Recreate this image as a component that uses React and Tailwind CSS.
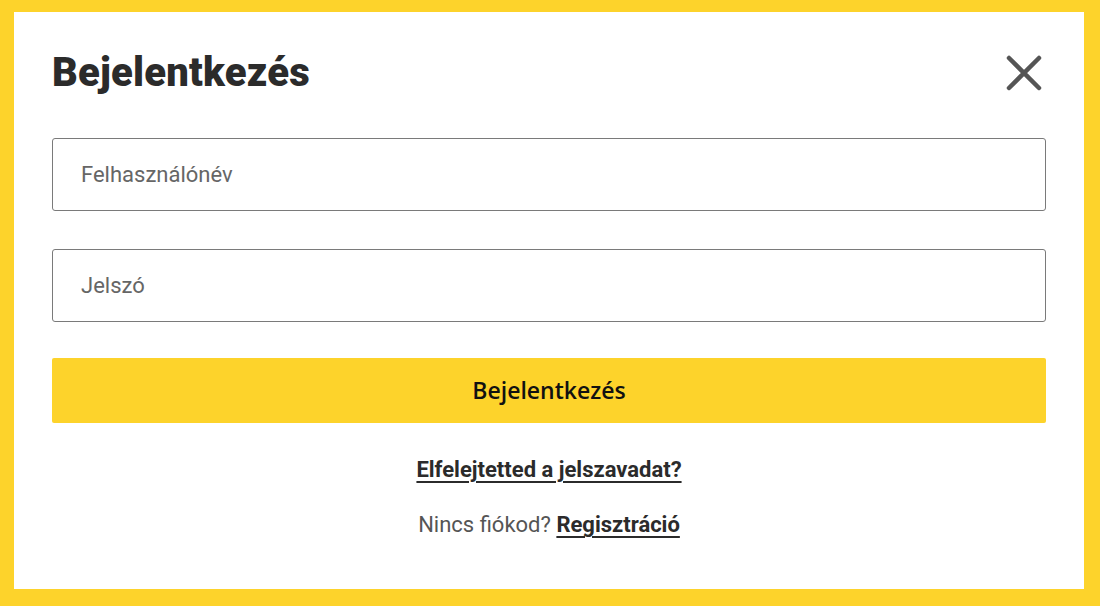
export default function App() {
  return (
    <div className="h-[606px] w-[1100px] bg-[#fdd32b] pt-[12px] pl-[14px] pr-[16px] pb-[17px] font-['Roboto',sans-serif]">
      <div className="flex h-[577px] w-[1070px] flex-col bg-white px-[38px]">
        <div className="flex items-center justify-between pt-[37px]">
          <h2 className="text-[40px] leading-[48px] font-black tracking-[0.2px] text-[#2b2b2b]">Bejelentkezés</h2>
          <button className="mr-[4px] text-[#555]" aria-label="Bezárás">
            <svg width="36" height="36" viewBox="0 0 36 36" fill="none">
              <path d="M3 3L33 33M33 3L3 33" stroke="currentColor" strokeWidth="4.5" strokeLinecap="round" />
            </svg>
          </button>
        </div>

        <div className="mt-[41px] flex flex-col gap-[38px]">
          <input
            className="h-[73px] w-full rounded-[3px] border border-[#7a7a7a] px-[28px] text-[22px] text-[#222] placeholder:text-[#666] outline-none"
            placeholder="Felhasználónév"
          />
          <input
            type="password"
            className="h-[73px] w-full rounded-[3px] border border-[#7a7a7a] px-[28px] text-[22px] text-[#222] placeholder:text-[#666] outline-none"
            placeholder="Jelszó"
          />
        </div>

        <button className="mt-[36px] h-[65px] w-full rounded-[2px] bg-[#fdd32b] font-['Open_Sans',sans-serif] text-[23px] font-semibold text-[#111]">
          Bejelentkezés
        </button>

        <div className="mt-[30px] text-center">
          <a href="#" className="text-[22px] font-bold text-[#2b2b2b] underline decoration-2 underline-offset-[4px]">
            Elfelejtetted a jelszavadat?
          </a>
        </div>

        <p className="mt-[22px] text-center text-[22px] text-[#555]">
          Nincs fiókod?{" "}
          <a href="#" className="font-bold text-[#2b2b2b] underline decoration-2 underline-offset-[4px]">
            Regisztráció
          </a>
        </p>
      </div>
    </div>
  );
}
